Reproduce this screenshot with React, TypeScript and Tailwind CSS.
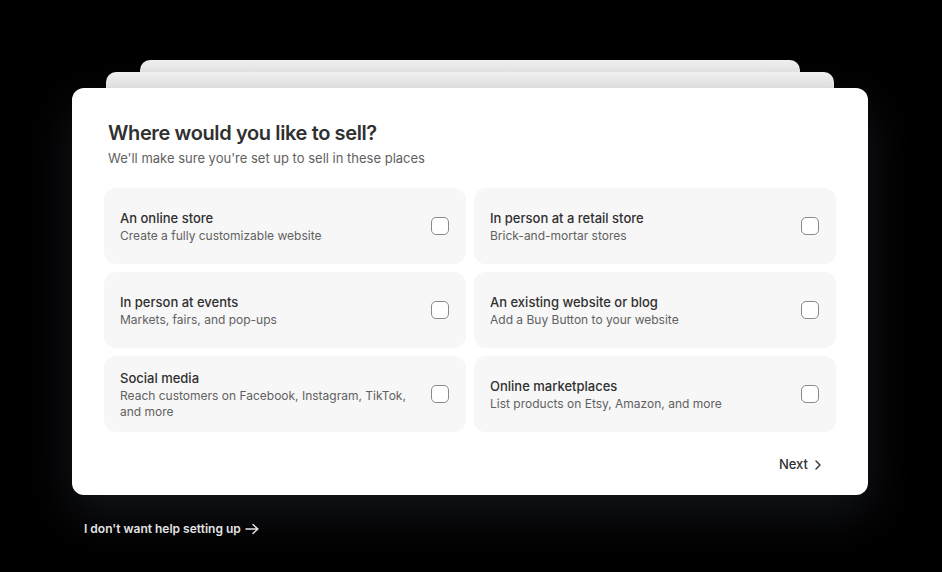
import { ChevronRight } from 'lucide-react';

const options = [
  { title: 'An online store', description: 'Create a fully customizable website' },
  { title: 'In person at a retail store', description: 'Brick-and-mortar stores' },
  { title: 'In person at events', description: 'Markets, fairs, and pop-ups' },
  { title: 'An existing website or blog', description: 'Add a Buy Button to your website' },
  { title: 'Social media', description: 'Reach customers on Facebook, Instagram, TikTok, and more' },
  { title: 'Online marketplaces', description: 'List products on Etsy, Amazon, and more' },
];

function OptionCard({ title, description }: { title: string; description: string }) {
  return (
    <label className="flex h-[76px] cursor-pointer items-center justify-between gap-4 rounded-xl bg-[#f7f7f7] pr-[17px] pl-4">
      <div className="flex min-w-0 flex-col">
        <span className="text-[13px] leading-[18px] font-medium text-[#303030]">{title}</span>
        <span className="mt-px text-[12px] leading-4 text-[#616161]">{description}</span>
      </div>
      <input
        type="checkbox"
        className="size-[18px] shrink-0 appearance-none rounded-[5px] border border-[#8a8a8a] bg-white"
      />
    </label>
  );
}

export default function App() {
  return (
    <div className="min-h-[572px] bg-black pt-[60px] font-['Inter',sans-serif] antialiased">
      <div className="ml-[72px] w-[796px]">
        <div className="mx-[68px] h-3 rounded-t-[10px] bg-gradient-to-b from-[#f2f2f2] to-[#e4e4e4]" />
        <div className="mx-[34px] h-4 rounded-t-[10px] bg-gradient-to-b from-[#f4f4f4] to-[#e8e8e8]" />
        <div className="rounded-xl bg-white shadow-[0_18px_50px_rgba(70,76,92,0.3)]">
          <div className="px-9 pt-[33px]">
            <h1 className="text-[20px] leading-6 font-semibold tracking-[-0.38px] text-[#303030]">
              Where would you like to sell?
            </h1>
            <p className="mt-[4px] text-[13px] leading-[18px] text-[#616161]">
              We'll make sure you're set up to sell in these places
            </p>
          </div>
          <div className="mt-[21px] grid grid-cols-2 gap-2 px-8">
            {options.map((option) => (
              <OptionCard key={option.title} title={option.title} description={option.description} />
            ))}
          </div>
          <div className="flex justify-end px-8 pt-[19px] pb-4">
            <button className="flex h-7 items-center gap-0.5 rounded-lg px-2.5 text-[13px] font-medium text-[#303030]">
              Next
              <ChevronRight className="size-4" strokeWidth={2} />
            </button>
          </div>
        </div>
        <button className="mt-[25px] ml-3 flex items-center gap-1 text-[12px] leading-[18px] font-semibold text-[#e3e3e3]">
          I don't want help setting up
          <svg width="14" height="12" viewBox="0 0 14 12" fill="none" stroke="currentColor" strokeWidth="1.5" strokeLinecap="round" strokeLinejoin="round">
            <path d="M1 6h12M8 1.5 12.8 6 8 10.5" />
          </svg>
        </button>
      </div>
    </div>
  );
}
